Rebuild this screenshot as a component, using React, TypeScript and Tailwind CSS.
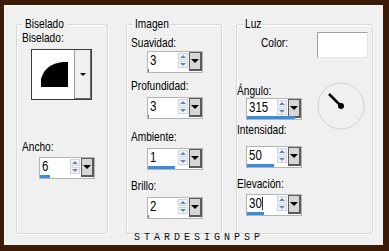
import React from 'react';

const sans = { fontFamily: '"Liberation Sans", Arial, sans-serif' };

function SpinBox({ value, fill, cursor }: { value: string; fill: number; cursor?: boolean }) {
  return (
    <div className="w-[56px] h-[22px] border border-[#b4b4b4] bg-white flex flex-col">
      <div className="flex h-[17px]">
        <div className="w-[31px] pl-[2px] flex items-center overflow-hidden">
          <span className="inline-flex items-center origin-left scale-x-[0.82] text-[14px] leading-[17px] text-black" style={sans}>
            {value}
            {cursor && <span className="w-[1px] h-[13px] bg-black" />}
          </span>
        </div>
        <div className="w-[11px] flex flex-col gap-[1px] py-[1px]">
          <div className="flex-1 border border-[#c9d3e3] bg-[#f3f5f9] flex items-center justify-center">
            <div className="w-0 h-0 border-l-[3px] border-r-[3px] border-b-[3px] border-l-transparent border-r-transparent border-b-[#6a80c0]" />
          </div>
          <div className="flex-1 border border-[#c9d3e3] bg-[#f3f5f9] flex items-center justify-center">
            <div className="w-0 h-0 border-l-[3px] border-r-[3px] border-t-[3px] border-l-transparent border-r-transparent border-t-[#6a80c0]" />
          </div>
        </div>
        <div className="w-[13px] h-[19px] ml-[1px] border border-[#5a5a5a] border-r-[2px] border-b-[2px] bg-[#d6d6d6] flex items-center justify-center">
          <div className="w-0 h-0 border-l-[4px] border-r-[4px] border-t-[4px] border-l-transparent border-r-transparent border-t-black" />
        </div>
      </div>
      <div className="h-[3px] flex">
        <div className="h-full bg-[#3a8be4]" style={{ width: fill }} />
      </div>
    </div>
  );
}

function Group({ title, className, children }: { title: string; className: string; children: React.ReactNode }) {
  return (
    <div className={`relative mt-[18px] h-[210px] rounded-[3px] border border-[#d7d7d7] shadow-[inset_1px_1px_0_#ffffff,1px_1px_0_#ffffff] ${className}`}>
      <span className="absolute -top-[9px] left-[6px] px-[2px] bg-[#f0f0f0] text-[13px] leading-[15px] text-black" >
        <span className="inline-block origin-left scale-x-[0.78] -mr-[10px]" style={sans}>{title}</span>
      </span>
      {children}
    </div>
  );
}

function Label({ text, className }: { text: string; className?: string }) {
  return (
    <div className={`text-[13px] leading-[15px] text-black whitespace-nowrap ${className ?? ''}`}>
      <span className="inline-block origin-left scale-x-[0.78]" style={sans}>{text}</span>
    </div>
  );
}

export default function App() {
  return (
    <div className="w-[389px] h-[251px] bg-[#3b1b07] pt-[5px] pl-[4px] pr-[6px] pb-[6px]">
      <div className="relative w-full h-full bg-[#f0f0f0] flex border-l border-t border-[#fafafa]">
        <Group title="Biselado" className="ml-[11px] w-[92px]">
          <Label text="Biselado:" className="mt-[5px] ml-[5px]" />
          <div className="mt-[4px] ml-[14px] w-[61px] h-[51px] border border-[#3c3c3c] bg-white flex">
            <div className="w-[42px] h-full">
              <svg width="42" height="49" viewBox="0 0 42 49">
                <path d="M9 37 L9 29 Q13 14 31 12 L36 12 L36 37 Z" fill="#000" />
              </svg>
            </div>
            <div className="flex-1 border-l border-[#9a9a9a] border-r border-b border-r-[#6a6a6a] border-b-[#6a6a6a] bg-[#f0f0f0] flex items-center justify-center">
              <div className="w-0 h-0 border-l-[3px] border-r-[3px] border-t-[3px] border-l-transparent border-r-transparent border-t-black" />
            </div>
          </div>
          <Label text="Ancho:" className="mt-[39px] ml-[5px]" />
          <div className="mt-[3px] ml-[22px]">
            <SpinBox value="6" fill={10} />
          </div>
        </Group>

        <Group title="Imagen" className="ml-[18px] w-[96px]">
          <Label text="Suavidad:" className="mt-[10px] ml-[4px]" />
          <div className="mt-[1px] ml-[20px]">
            <SpinBox value="3" fill={1} />
          </div>
          <Label text="Profundidad:" className="mt-[5px] ml-[4px]" />
          <div className="mt-[4px] ml-[20px]">
            <SpinBox value="3" fill={1} />
          </div>
          <Label text="Ambiente:" className="mt-[10px] ml-[4px]" />
          <div className="mt-[4px] ml-[20px]">
            <SpinBox value="1" fill={27} />
          </div>
          <Label text="Brillo:" className="mt-[8px] ml-[4px]" />
          <div className="mt-[4px] ml-[20px]">
            <SpinBox value="2" fill={1} />
          </div>
        </Group>

        <Group title="Luz" className="ml-[14px] w-[137px]">
          <div className="flex mt-[7px]">
            <Label text="Color:" className="mt-[3px] ml-[24px]" />
            <div className="ml-auto mr-[4px] w-[51px] h-[26px] bg-white border border-[#a0a0a0] border-r-[#e4e4e4] border-b-[#e4e4e4]" />
          </div>
          <div className="flex mt-[25px]">
            <div className="w-[80px] flex flex-col">
              <Label text="Ángulo:" />
              <div className="ml-[9px]">
                <SpinBox value="315" fill={48} />
              </div>
              <Label text="Intensidad:" className="mt-[2px]" />
              <div className="mt-[9px] ml-[9px]">
                <SpinBox value="50" fill={27} />
              </div>
              <Label text="Elevación:" className="mt-[8px]" />
              <div className="mt-[3px] ml-[9px]">
                <SpinBox value="30" fill={17} cursor />
              </div>
            </div>
            <div className="-mt-[1px]">
              <svg width="49" height="49" viewBox="0 0 49 49">
                <circle cx="24" cy="24" r="23" fill="none" stroke="#d0d0d0" strokeWidth="1" />
                <line x1="12" y1="12" x2="24" y2="24" stroke="#000" strokeWidth="2.5" />
                <circle cx="24" cy="24" r="3" fill="#000" />
              </svg>
            </div>
          </div>
        </Group>

        <div className="absolute left-[129px] top-[227px] text-[10px] leading-[10px] tracking-[4px] text-[#111]" style={{ fontFamily: '"Liberation Mono", monospace' }}>
          STARDESIGNPSP
        </div>
      </div>
    </div>
  );
}
